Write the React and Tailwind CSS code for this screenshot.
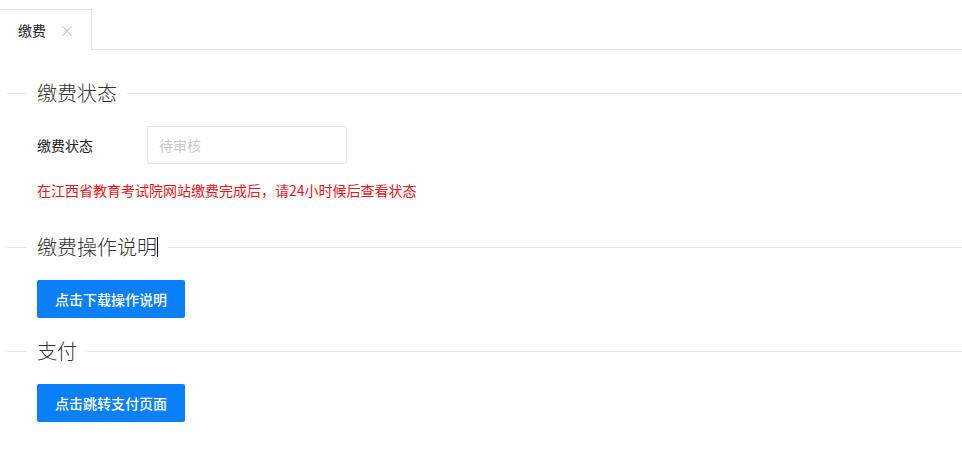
import React from "react";

function Divider({ title, cursor }) {
  return (
    <div className="flex items-center h-[28px] pl-[7px]">
      <div className="w-[20px] h-px bg-[#e8e8e8]" />
      <div className="mx-[10px] text-[20px] leading-[28px] font-light text-[#333] flex items-center whitespace-nowrap">
        {title}
        {cursor && <span className="inline-block w-px h-[20px] bg-black" />}
      </div>
      <div className="flex-1 h-px bg-[#e8e8e8]" />
    </div>
  );
}

function Btn({ children }) {
  return (
    <button className="w-[148px] h-[38px] rounded-[2px] bg-[#0a80f8] text-white text-[14px] font-medium">
      {children}
    </button>
  );
}

export default function App() {
  return (
    <div
      className="w-[962px] h-[475px] bg-white text-[#333]"
      style={{ fontFamily: '"Microsoft YaHei", "Noto Sans CJK SC", "Liberation Sans", sans-serif' }}
    >
      <div className="flex pt-[9px]">
        <div className="w-[92px] h-[41px] border-t border-r border-[#e4e4e4] flex items-center pl-[18px] text-[14px] text-[#222]">
          <span>缴费</span>
          <span className="ml-[13px] text-[#c0c0c0] text-[16px] leading-none font-light">×</span>
        </div>
        <div className="flex-1 h-[41px] border-b border-[#e4e4e4]" />
      </div>

      <div className="mt-[29px]">
        <Divider title="缴费状态" />
      </div>

      <div className="mt-[19px] flex items-center pl-[37px]">
        <div className="w-[110px] text-[14px] text-[#222]">缴费状态</div>
        <div className="w-[200px] h-[38px] border border-[#e6e6e6] rounded-[2px] flex items-center pl-[11px] text-[14px] text-[#c8c8c8]">
          待审核
        </div>
      </div>

      <div className="mt-[16px] pl-[37px] text-[14px] leading-[20px] text-[#e8141a]">
        在江西省教育考试院网站缴费完成后，请24小时候后查看状态
      </div>

      <div className="mt-[33px]">
        <Divider title="缴费操作说明" cursor />
      </div>

      <div className="mt-[19px] pl-[37px]">
        <Btn>点击下载操作说明</Btn>
      </div>

      <div className="mt-[19px]">
        <Divider title="支付" />
      </div>

      <div className="mt-[19px] pl-[37px]">
        <Btn>点击跳转支付页面</Btn>
      </div>
    </div>
  );
}
